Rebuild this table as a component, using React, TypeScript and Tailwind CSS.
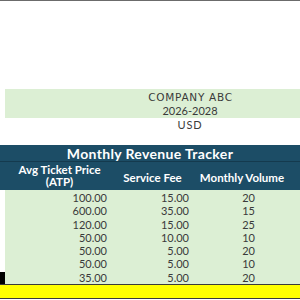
const rows = [
  ['100.00', '15.00', '20'],
  ['600.00', '35.00', '15'],
  ['120.00', '15.00', '25'],
  ['50.00', '10.00', '10'],
  ['50.00', '5.00', '20'],
  ['50.00', '5.00', '10'],
  ['35.00', '5.00', '20'],
];

export default function App() {
  return (
    <div className="w-[300px] h-[300px] bg-white overflow-hidden text-[#3a3a3a]" style={{ fontFamily: 'Lato, "Liberation Sans", sans-serif' }}>
      <div className="h-px bg-[#6b6b6b]" />
      <div className="h-[88px]" />

      <div className="ml-[5px] bg-[#dcefd4] text-[11px] leading-[14px] text-center pl-[75px] pt-px">
        <div className="font-['DejaVu_Sans',sans-serif] text-[10.5px] tracking-[0.7px] pl-px">COMPANY ABC</div>
        <div>2026-2028</div>
      </div>
      <div className="text-[11px] leading-[14px] text-center pl-[80px] tracking-[0.8px]">USD</div>

      <div className="h-[13px]" />

      <div className="bg-[#1c4d66] text-white font-bold">
        <div className="h-[17px] text-[14px] leading-[17px] text-center tracking-wide border-b border-[#143a4e]">
          Monthly Revenue Tracker
        </div>
        <div className="h-[28px] grid grid-cols-[115px_75px_1fr] items-center text-[11.5px] leading-[12px] text-center">
          <div className="pl-[4px]">Avg Ticket Price<br />(ATP)</div>
          <div className="pt-[3px]">Service Fee</div>
          <div className="pt-[3px] pr-[6px]">Monthly Volume</div>
        </div>
      </div>

      <div className="flex">
        <div className="w-[5px] flex flex-col justify-end">
          <div className="h-[12px] bg-black" />
        </div>
        <div className="flex-1 bg-[#dcefd4] pt-px text-[11px] leading-[13.3px]">
          {rows.map((r, i) => (
            <div key={i} className="grid grid-cols-[102px_82px_66px] text-right">
              <div>{r[0]}</div>
              <div>{r[1]}</div>
              <div>{r[2]}</div>
            </div>
          ))}
        </div>
      </div>

      <div className="h-px bg-[#3a3a3a]" />
      <div className="h-[13px] bg-[#ffff00]" />
      <div className="h-px bg-[#3a3a3a]" />
    </div>
  );
}
